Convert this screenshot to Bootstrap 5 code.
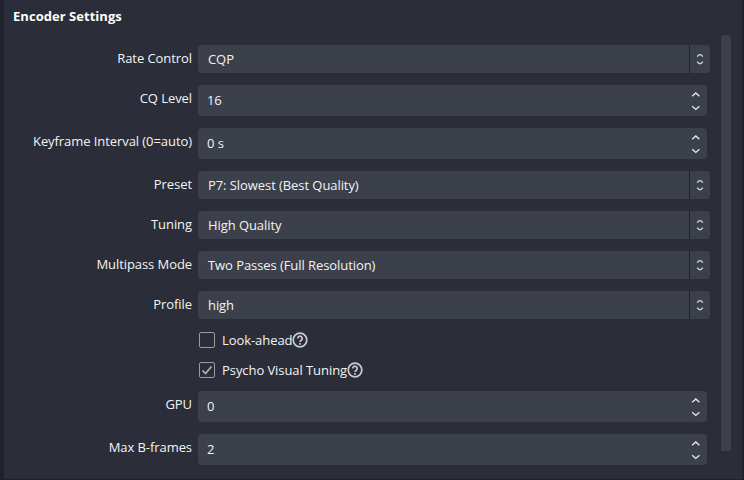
<!DOCTYPE html>
<html lang="en">
<head>
<meta charset="utf-8">
<meta name="viewport" content="width=device-width, initial-scale=1">
<title>Encoder Settings</title>
<link href="https://cdn.jsdelivr.net/npm/bootstrap@5.3.0/dist/css/bootstrap.min.css" rel="stylesheet">
<style>
  body { background: #1f212c; font: 13px/18px "Open Sans", "Noto Sans", sans-serif; letter-spacing: -.07px; color: #f3f3f5; }
  .panel { height: 479px; margin: 0 2px 0 4px; background: #2b2e38; }
  .panel-title { font-size: 13px; line-height: 18px; font-weight: 700; letter-spacing: .04px; color: #fff; padding: 7px 0 0 9px; height: 35px; }
  .settings { width: 706px; padding-top: 10px; gap: 12px; }
  .name { width: 188px; white-space: nowrap; }
  .field { background: #3c404b; border-radius: 4px; margin-left: 6px; white-space: nowrap; }
  .select { width: 512px; height: 28px; padding-left: 10px; }
  .spin { width: 509px; height: 31px; padding-left: 9px; }
  .spin .value { padding-bottom: 1px; }
  .opener { width: 21px; border-left: 1px solid #20222c; }
  .steps { width: 23px; }
  .glyph { fill: none; stroke: #e6e7ec; stroke-width: 1.4; }
  .small-glyph { stroke: #d4d5dc; stroke-width: 1.3; }
  .help-glyph { stroke: #c9cad1; }
  .tick-glyph { stroke: #b4b6be; stroke-width: 1.6; }
  .option { height: 18px; margin-left: 195px; }
  .box { width: 16px; height: 16px; border: 1px solid #989aa4; border-radius: 2px; margin-right: 7px; }
  .scroller { width: 10px; height: 416px; margin-left: 11px; background: #3c404b; border-radius: 3px 3px 0 0; }
</style>
<script src="https://cdn.jsdelivr.net/npm/bootstrap@5.3.0/dist/js/bootstrap.bundle.min.js"></script>
</head>
<body class="overflow-hidden">
<svg class="d-none">
  <symbol id="small-arrows" viewBox="0 0 8 14"><path d="M1.2 4.7Q2.5 2.6 4 2.6T6.8 4.7M1.2 9.7Q2.5 11.8 4 11.8T6.8 9.7"/></symbol>
  <symbol id="big-arrows" viewBox="0 0 10 20"><path d="M1.2 5.2 4.8 2 8.4 5.2M1.2 15.2 4.8 18.4 8.4 15.2"/></symbol>
  <symbol id="help" viewBox="0 0 16 16"><circle cx="8" cy="8" r="6.8" stroke-width="1.7"/><path stroke-width="1.7" d="M5.8 6.5a2.2 2.2 0 1 1 3.5 1.7C8.4 8.8 8 9.1 8 10M8 11.1v1.6"/></symbol>
</svg>
<main class="panel">
  <h1 class="panel-title m-0">Encoder Settings</h1>
  <div class="d-flex align-items-start">
    <form class="settings d-flex flex-column">
      <div class="d-flex"><div class="name text-end pt-1">Rate Control</div><div class="field select d-flex align-items-center"><span class="flex-fill">CQP</span><span class="opener h-100 d-flex align-items-center justify-content-center"><svg class="glyph small-glyph" width="8" height="14"><use href="#small-arrows"/></svg></span></div></div>
      <div class="d-flex"><div class="name text-end pt-1">CQ Level</div><div class="field spin d-flex align-items-center"><span class="value flex-fill">16</span><span class="steps d-flex justify-content-center"><svg class="glyph" width="10" height="20"><use href="#big-arrows"/></svg></span></div></div>
      <div class="d-flex"><div class="name text-end pt-1">Keyframe Interval (0=auto)</div><div class="field spin d-flex align-items-center"><span class="value flex-fill">0 s</span><span class="steps d-flex justify-content-center"><svg class="glyph" width="10" height="20"><use href="#big-arrows"/></svg></span></div></div>
      <div class="d-flex"><div class="name text-end pt-1">Preset</div><div class="field select d-flex align-items-center"><span class="flex-fill">P7: Slowest (Best Quality)</span><span class="opener h-100 d-flex align-items-center justify-content-center"><svg class="glyph small-glyph" width="8" height="14"><use href="#small-arrows"/></svg></span></div></div>
      <div class="d-flex"><div class="name text-end pt-1">Tuning</div><div class="field select d-flex align-items-center"><span class="flex-fill">High Quality</span><span class="opener h-100 d-flex align-items-center justify-content-center"><svg class="glyph small-glyph" width="8" height="14"><use href="#small-arrows"/></svg></span></div></div>
      <div class="d-flex"><div class="name text-end pt-1">Multipass Mode</div><div class="field select d-flex align-items-center"><span class="flex-fill">Two Passes (Full Resolution)</span><span class="opener h-100 d-flex align-items-center justify-content-center"><svg class="glyph small-glyph" width="8" height="14"><use href="#small-arrows"/></svg></span></div></div>
      <div class="d-flex"><div class="name text-end pt-1">Profile</div><div class="field select d-flex align-items-center"><span class="flex-fill">high</span><span class="opener h-100 d-flex align-items-center justify-content-center"><svg class="glyph small-glyph" width="8" height="14"><use href="#small-arrows"/></svg></span></div></div>
      <div class="option d-flex align-items-center"><span class="box"></span><span>Look-ahead</span><svg class="glyph help-glyph" width="16" height="16"><use href="#help"/></svg></div>
      <div class="option d-flex align-items-center"><span class="box d-flex"><svg class="glyph tick-glyph" width="14" height="14"><path d="M2.5 7.5 5.5 10.5 11.5 3.5"/></svg></span><span>Psycho Visual Tuning</span><svg class="glyph help-glyph" width="16" height="16"><use href="#help"/></svg></div>
      <div class="d-flex"><div class="name text-end pt-1">GPU</div><div class="field spin d-flex align-items-center"><span class="value flex-fill">0</span><span class="steps d-flex justify-content-center"><svg class="glyph" width="10" height="20"><use href="#big-arrows"/></svg></span></div></div>
      <div class="d-flex"><div class="name text-end pt-1">Max B-frames</div><div class="field spin d-flex align-items-center"><span class="value flex-fill">2</span><span class="steps d-flex justify-content-center"><svg class="glyph" width="10" height="20"><use href="#big-arrows"/></svg></span></div></div>
    </form>
    <div class="scroller"></div>
  </div>
</main>
</body>
</html>
